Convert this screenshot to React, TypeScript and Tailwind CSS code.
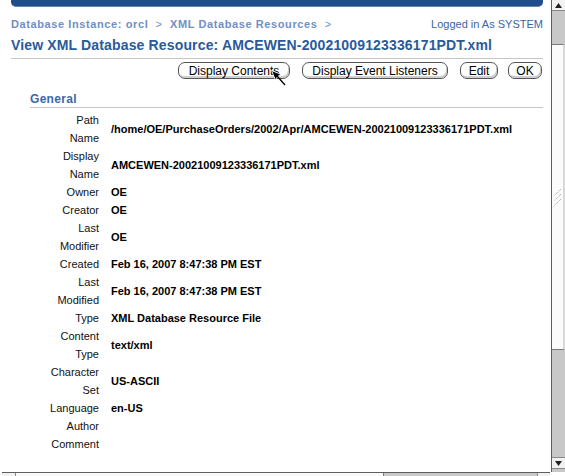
import React from "react";

const rows: { label: string; value: string }[] = [
  { label: "Path Name", value: "/home/OE/PurchaseOrders/2002/Apr/AMCEWEN-20021009123336171PDT.xml" },
  { label: "Display Name", value: "AMCEWEN-20021009123336171PDT.xml" },
  { label: "Owner", value: "OE" },
  { label: "Creator", value: "OE" },
  { label: "Last Modifier", value: "OE" },
  { label: "Created", value: "Feb 16, 2007 8:47:38 PM EST" },
  { label: "Last Modified", value: "Feb 16, 2007 8:47:38 PM EST" },
  { label: "Type", value: "XML Database Resource File" },
  { label: "Content Type", value: "text/xml" },
  { label: "Character Set", value: "US-ASCII" },
  { label: "Language", value: "en-US" },
  { label: "Author", value: "" },
  { label: "Comment", value: "" },
];

const buttons = [
  { label: "Display Contents", className: "w-[112px]" },
  { label: "Display Event Listeners", className: "w-[146px] ml-[12px]" },
  { label: "Edit", className: "w-[38px] ml-[12px]" },
  { label: "OK", className: "w-[34px] ml-[10px]" },
];

function Cursor() {
  return (
    <svg className="absolute left-[271px] top-[70px]" width="16" height="17" viewBox="0 0 16 17">
      <polygon points="0.5,0.5 10,4.5 6.5,6.5 4.5,10" fill="#000" stroke="#fff" strokeWidth="0.8" />
      <line x1="6" y1="6" x2="14" y2="15" stroke="#000" strokeWidth="1.3" />
    </svg>
  );
}

function VScrollbar() {
  return (
    <div className="w-[14px] flex flex-col border-l border-[#5e5e5e] bg-[#c8c8c8]">
      <div className="h-[11px] bg-[#f2f2f2] border-b border-[#8a8a8a] flex items-center justify-center">
        <svg width="7" height="5" viewBox="0 0 7 5">
          <polygon points="3.5,0 7,5 0,5" fill="#222" />
        </svg>
      </div>
      <div className="h-[33px]" />
      <div className="h-[306px] bg-[#fbfbfb] border-y border-[#7a7a7a] border-r-2 border-r-[#d8d8d8] flex items-center justify-center">
        <svg width="8" height="17" viewBox="0 0 8 17">
          <g stroke="#9a9a9a" strokeWidth="1" strokeDasharray="1 1">
            <line x1="7" y1="0" x2="0" y2="7" />
            <line x1="7" y1="5" x2="0" y2="12" />
            <line x1="7" y1="10" x2="0" y2="17" />
          </g>
        </svg>
      </div>
      <div className="h-[107px]" />
      <div className="h-[12px] bg-[#f2f2f2] border-y border-[#8a8a8a] flex items-center justify-center">
        <svg width="7" height="5" viewBox="0 0 7 5">
          <polygon points="0,0 7,0 3.5,5" fill="#222" />
        </svg>
      </div>
      <div className="flex-1" />
    </div>
  );
}

function HScrollbar() {
  return (
    <div className="h-[14px] shrink-0 flex">
      <div className="w-[2px]" />
      <div className="w-[548px] flex border-t border-[#5e5e5e] bg-[#c8c8c8]">
        <div className="w-[14px] bg-[#f2f2f2] border-r border-[#8a8a8a]" />
        <div className="w-[368px] bg-[#fbfbfb] border-r border-[#7a7a7a]" />
        <div className="flex-1" />
        <div className="w-[13px] bg-[#f2f2f2] border-l border-[#8a8a8a]" />
      </div>
    </div>
  );
}

export default function App() {
  return (
    <div className="w-[565px] h-[476px] overflow-hidden bg-white flex flex-col font-['Liberation_Sans',Arial,sans-serif] text-black">
      <div className="h-[472px] shrink-0 flex">
        <div className="flex-1 relative">
          <div className="ml-[11px] mr-[8px]">
            <div className="h-[7px] rounded-b-[5px] bg-[#1f4c8a] border-b border-[#6585b8]" />
            <div className="mt-[11px] h-[13px] flex items-center justify-between text-[11px] leading-[13px]">
              <div className="font-bold text-[#6f8fc8] tracking-[0.6px]">
                Database Instance: orcl&nbsp; <span className="font-normal">&gt;</span>&nbsp; XML Database Resources&nbsp;{" "}
                <span className="font-normal">&gt;</span>
              </div>
              <div className="text-[#3b63a6]">Logged in As SYSTEM</div>
            </div>
            <h1 className="mt-[5px] text-[14px] leading-[18px] font-bold text-[#2a5a9a] tracking-[0.15px]">
              View XML Database Resource: AMCEWEN-20021009123336171PDT.xml
            </h1>
            <div className="mt-[4px] h-px bg-[#c6c6c6]" />
          </div>

          <div className="mt-[3px] mr-[9px] flex justify-end">
            {buttons.map((b) => (
              <div
                key={b.label}
                className={`${b.className} h-[17px] flex items-center justify-center rounded-[7px] border border-[#555] bg-white shadow-[inset_-1px_-2px_0_#cfcfcf] text-[12px] leading-[14px] text-black`}
              >
                {b.label}
              </div>
            ))}
          </div>

          <div className="ml-[30px] mr-[8px] mt-[13px]">
            <div className="text-[12px] leading-[14px] font-bold text-[#3b68a9] tracking-[0.3px]">General</div>
            <div className="mt-[1px] h-px bg-[#c6c6c6]" />
          </div>

          <div className="mt-[3px] ml-[49px] flex flex-col text-[11px] leading-[18px]">
            {rows.map((r) => (
              <div key={r.label} className="flex">
                <div className="w-[50px] shrink-0 text-right text-[#111]">{r.label}</div>
                <div className="ml-[12px] self-center font-bold">{r.value}</div>
              </div>
            ))}
          </div>

          <Cursor />
        </div>
        <VScrollbar />
      </div>
      <HScrollbar />
    </div>
  );
}
